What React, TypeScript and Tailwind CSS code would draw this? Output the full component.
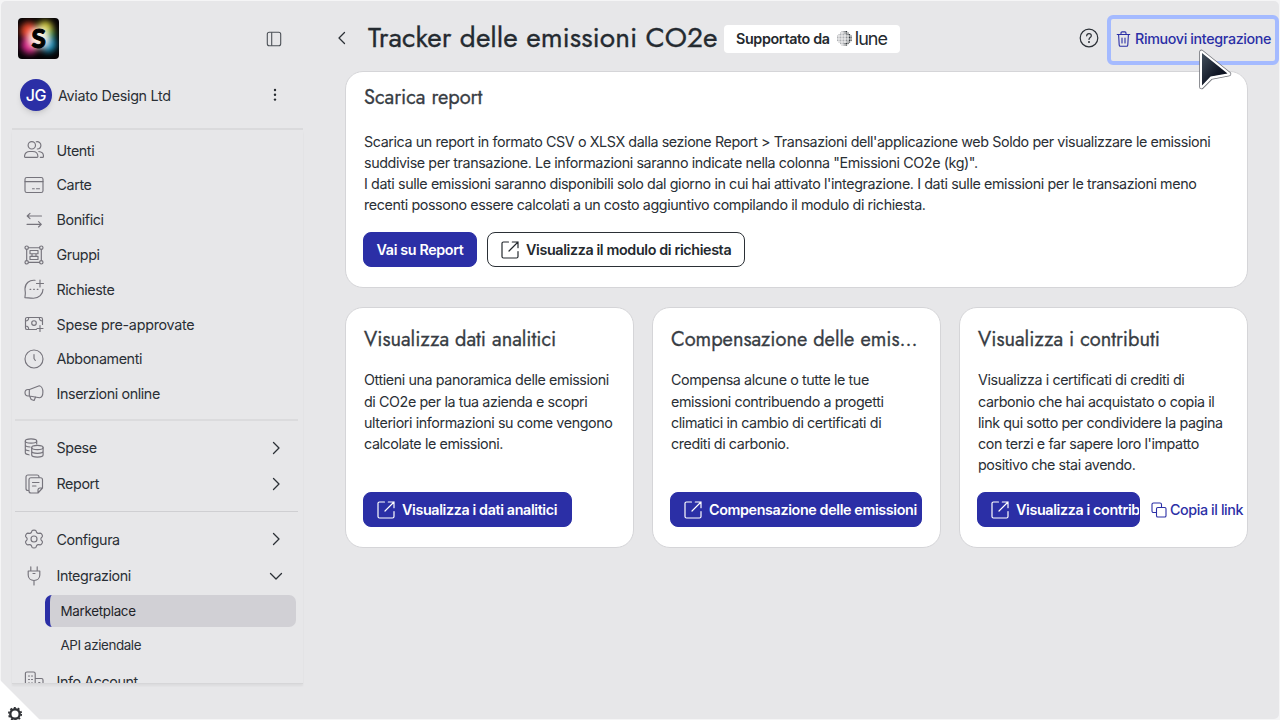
import type { ReactNode } from "react";
import clsx from "clsx";

type IconName =
  | "users"
  | "card"
  | "transfer"
  | "groups"
  | "request"
  | "banknote"
  | "clock"
  | "megaphone"
  | "coins"
  | "report"
  | "gear"
  | "plug"
  | "building";

// Sidebar icons, all drawn on a 20x20 grid
const ICONS: Record<IconName, ReactNode> = {
  users: (
    <>
      <circle cx="7.8" cy="5.3" r="3.7" />
      <path d="M1.3 17.3c-.5 0-.8-.3-.8-.8 0-3.2 2.3-5 5.3-5h2.8c3 0 5.3 1.8 5.3 5 0 .5-.3.8-.8.8zM12.3 1.8c2.4-.6 4.6 1.2 4.6 3.5s-1.700 3.700-3.600 3.700M14.800 11.500c2.700.2 4.700 2 4.700 4.800 0 .6-.3 1-.9 1h-2.300" />
    </>
  ),
  card: (
    <>
      <rect x="1" y="2.500" width="18" height="15" rx="1.800" />
      <path d="M1 6.600h18M8.500 13.700h1.800M12.500 13.700h3" />
    </>
  ),
  transfer: <path d="M17.500 6H3.200M6 3.300 3.200 6 6 8.700M3 14.300h14.300M14.500 11.600l2.800 2.700-2.800 2.700" />,
  groups: (
    <>
      <circle cx="2.700" cy="2.700" r="1.700" />
      <circle cx="17.300" cy="2.700" r="1.700" />
      <circle cx="2.700" cy="17.300" r="1.700" />
      <circle cx="17.300" cy="17.300" r="1.700" />
      <path d="M4.400 2.700h11.200M4.400 17.300h11.200M2.700 4.400v11.200M17.300 4.400v11.200M6 5.500h8v3.200H6zM6 11.300h8v3.200H6zM8 8.700v2.600M12 8.700v2.600" />
    </>
  ),
  request: (
    <path d="M11 1.300C5.500.6 1 4.500 1 9.800c0 2.400.5 3.300.3 5.200l-.4 3.700c3 .1 4.500.5 8.600.5 5.300 0 9.500-4 9.500-9M16 1v7M12.500 4.500h7M6 10.300h.8M9.600 10.300h.8M13.200 10.300h.8" />
  ),
  banknote: (
    <>
      <path d="M12.500 15.500H3.200c-1 0-1.700-.6-1.700-1.600V5.200c0-1 .6-1.700 1.700-1.700h13.600c1.100 0 1.700.7 1.700 1.700v5.300M1.500 7c2 0 3.200-1.300 3.200-3.500M18.500 7c-2 0-3.200-1.300-3.200-3.500M1.500 12c2 0 3.200 1.300 3.200 3.500M16 11.500v6M13 14.500h6" />
      <circle cx="10" cy="9" r="2.300" />
    </>
  ),
  clock: (
    <>
      <circle cx="10" cy="10" r="9" />
      <path d="M10 5.500v4l1.300 2" />
    </>
  ),
  megaphone: (
    <path d="M5.500 5.500 15.300 1.800c2 .3 3.600 3 3.600 6.200s-1.500 5.500-3.400 5.800L5.300 12H4c-1.800 0-3-1.300-3-3.200s1.200-3.300 3-3.300zM5.300 5.700v6.200M5.700 12.200l1.500 3.300 2.900 1 1.500-3.400" />
  ),
  coins: (
    <>
      <ellipse cx="7" cy="3" rx="5.700" ry="2.100" />
      <path d="M1.300 3v11.800c0 1 1.600 1.700 3.700 2M12.700 3v3M1.300 7c0 1 1.800 1.800 4.800 2M1.300 11c0 1 1.600 1.600 3.700 1.800" />
      <ellipse cx="13.400" cy="9.500" rx="5.700" ry="2.100" />
      <path d="M7.700 9.500v7.600c0 1.100 2.500 2 5.700 2s5.700-.9 5.700-2V9.500M7.700 13.300c0 1.200 2.500 2 5.700 2s5.700-.8 5.700-2" />
    </>
  ),
  report: (
    <>
      <path d="M4.500 16.500H4c-1.200 0-2-.8-2-2V3c0-1.200.8-2 2-2h9c1.200 0 2 .8 2 2v.5" />
      <path d="m18.500 14-4.500 5H7c-1.200 0-2-.8-2-2V5.700c0-1.200.8-2 2-2h9.500c1.200 0 2 .8 2 2zM18.500 14H16c-1.200 0-2 .8-2 2v3M8.500 8.500h6.500M8.500 12h3.500" />
    </>
  ),
  gear: (
    <>
      <circle cx="10" cy="10" r="3" />
      <path d="M8 1.800c.6-1 3.400-1 4 0l.6 1.600c.4.7 1.200 1.100 2 1l1.700-.3c1.200 0 2.600 2.400 2 3.500l-1.100 1.300c-.5.700-.5 1.500 0 2.200l1.100 1.300c.6 1.100-.8 3.500-2 3.500l-1.700-.3c-.8-.1-1.600.3-2 1l-.6 1.600c-.6 1-3.400 1-4 0l-.6-1.600c-.4-.7-1.200-1.100-2-1l-1.700.3c-1.200 0-2.600-2.400-2-3.500l1.100-1.300c.5-.7.5-1.500 0-2.200L1.700 7.600c-.6-1.100.8-3.500 2-3.500l1.700.3c.8.1 1.600-.3 2-1z" />
    </>
  ),
  plug: <path d="M6.800.8v4M13.200.8v4M4.200 5h11.600v4c0 3.200-2.400 5.500-5.800 5.500S4.200 12.200 4.200 9zM10 14.500V19M9 7.500h2" />,
  building: (
    <path d="M11.500 19H3c-1 0-1.600-.6-1.600-1.600V2.600C1.400 1.600 2 1 3 1h6.500c1 0 1.700.6 1.700 1.600V19M11.500 7.500h6c1 0 1.500.5 1.500 1.500v9c0 .6-.4 1-1 1h-6.500M4.500 5h1M7.500 5h1M4.500 8.500h1M7.500 8.500h1M4.500 12h1M7.500 12h1M14.700 11.500h1.200" />
  ),
};

function NavIcon({ name }: { name: IconName }) {
  return (
    <svg
      viewBox="0 0 20 20"
      className="size-5 shrink-0 text-[#76747c]"
      fill="none"
      stroke="currentColor"
      strokeWidth="1.15"
      strokeLinecap="round"
      strokeLinejoin="round"
    >
      {ICONS[name]}
    </svg>
  );
}

const MAIN_NAV: { label: string; icon: IconName; className?: string }[] = [
  { label: "Utenti", icon: "users" },
  { label: "Carte", icon: "card" },
  { label: "Bonifici", icon: "transfer" },
  { label: "Gruppi", icon: "groups" },
  { label: "Richieste", icon: "request" },
  { label: "Spese pre-approvate", icon: "banknote", className: "tracking-[-0.260px]" },
  { label: "Abbonamenti", icon: "clock" },
  { label: "Inserzioni online", icon: "megaphone" },
];

function Chevron({ className }: { className?: string }) {
  return (
    <svg viewBox="0 0 14 14" className={clsx("size-3.5", className)} fill="none" stroke="#2b3036" strokeWidth="1.300" strokeLinecap="round" strokeLinejoin="round">
      <path d="m4.500 1.500 5.500 5.500-5.500 5.500" />
    </svg>
  );
}

function NavRow({ label, icon, chevron, className }: { label: string; icon: IconName; chevron?: "right" | "down"; className?: string }) {
  return (
    <div className={clsx("flex shrink-0 items-center pl-2.5 pr-[13px]", chevron ? "h-[36.300px]" : "h-[34.800px]")}>
      <NavIcon name={icon} />
      <span className={clsx("ml-[12.500px] flex-1 whitespace-nowrap", className)}>{label}</span>
      {chevron && <Chevron className={chevron === "down" ? "rotate-90" : ""} />}
    </div>
  );
}

function Logo() {
  return (
    <svg viewBox="0 0 41 41" className="size-[41px] rounded-[4px]">
      <defs>
        <filter id="glow" x="-50%" y="-50%" width="200%" height="200%">
          <feGaussianBlur stdDeviation="3.200" />
        </filter>
      </defs>
      <rect width="41" height="41" fill="#050305" />
      <g filter="url(#glow)">
        <circle cx="11" cy="13" r="8.500" fill="#ee4a2c" />
        <circle cx="27" cy="11" r="8" fill="#d6d03c" />
        <circle cx="12" cy="27" r="8.500" fill="#e42a94" />
        <circle cx="30" cy="26" r="8" fill="#1ca0ca" />
        <circle cx="33" cy="16" r="4" fill="#3fa850" />
        <circle cx="21" cy="20" r="9.500" fill="#fdf3e6" />
      </g>
      <text x="20.500" y="29.500" textAnchor="middle" fontSize="26" fontWeight="900" fill="#030303" stroke="#030303" strokeWidth="1" fontFamily="Lato, sans-serif">
        S
      </text>
    </svg>
  );
}

function Sidebar() {
  return (
    <aside className="flex w-[304px] shrink-0 flex-col pl-[11px] text-[14.300px]">
      <div className="flex h-[75px] items-center justify-between pl-1.5 pr-[23px]">
        <Logo />
        <svg viewBox="0 0 16 16" className="size-4" fill="none" stroke="#4c5157" strokeWidth="1.100">
          <rect x="1.300" y="1.300" width="13.400" height="13.400" rx="2" />
          <path d="M5.700 1.300v13.400" />
        </svg>
      </div>
      <div className="flex h-[52px] shrink-0 items-start pl-2 pr-7 pt-[3px]">
        <div className="flex size-8 items-center justify-center rounded-full bg-[#2b2fa6] text-[16px] font-medium text-white shadow-md">JG</div>
        <span className="ml-1.5 mt-1.5 flex-1 tracking-[-0.280px]">Aviato Design Ltd</span>
        <svg viewBox="0 0 4 14" className="mt-[9px] h-3.5 w-1" fill="#25292e">
          <circle cx="2" cy="2" r="1.200" />
          <circle cx="2" cy="6.800" r="1.200" />
          <circle cx="2" cy="11.600" r="1.200" />
        </svg>
      </div>
      <div className="h-0.5 w-[291px] shrink-0 bg-[#dadadc]" />
      <nav className="flex h-[554px] w-[291px] flex-col overflow-hidden border-b border-[#d6d6d8] pl-0.5 pr-[7px] pt-[2.900px] shadow-[0_2px_2px_rgba(0,0,0,0.05)]">
        {MAIN_NAV.map((item) => (
          <NavRow key={item.label} {...item} />
        ))}
        <hr className="-mr-0.5 mb-[9px] ml-[1px] mt-[7.400px] shrink-0 border-t-2 border-[#dbdbdd]" />
        <NavRow label="Spese" icon="coins" chevron="right" />
        <NavRow label="Report" icon="report" chevron="right" />
        <hr className="-mr-0.5 mb-[9px] ml-[1px] mt-[9px] shrink-0 border-[#cfcfd2]" />
        <NavRow label="Configura" icon="gear" chevron="right" />
        <NavRow label="Integrazioni" icon="plug" chevron="down" />
        <div className="ml-[31px] mt-[1px] flex h-8 shrink-0 items-center rounded-[7px] border-l-[5px] border-[#2b2fa6] bg-[#d1d0d5] pl-[10.500px] text-[13.400px] tracking-[-0.300px] text-[#1f2429]">
          Marketplace
        </div>
        <div className="ml-[46.500px] flex h-[37px] shrink-0 items-center text-[13.400px]">API aziendale</div>
        <NavRow label="Info Account" icon="building" />
      </nav>
    </aside>
  );
}

function ExternalIcon() {
  return (
    <svg viewBox="0 0 18 18" className="size-[18px] shrink-0" fill="none" stroke="currentColor" strokeWidth="1.200" strokeLinecap="round" strokeLinejoin="round">
      <path d="M7.500 1H2.500C1.600 1 1 1.600 1 2.500v13c0 .9.600 1.500 1.500 1.500h13c.9 0 1.500-.6 1.500-1.500v-5M8 10l9-9M11.300 1H17v5.700" />
    </svg>
  );
}

function Button({ children, outline, external, className }: { children: ReactNode; outline?: boolean; external?: boolean; className?: string }) {
  return (
    <button
      className={clsx(
        "flex h-[35px] shrink-0 items-center overflow-hidden whitespace-nowrap rounded-[8px] border pt-[1px] text-[14.300px] font-semibold tracking-[-0.360px]",
        outline ? "border-[#2b3036] bg-white text-[#24292e]" : "border-[#2b2fa6] bg-[#2b2fa6] text-white",
        external ? "gap-[7px] pl-[13px]" : "justify-center",
        className
      )}
    >
      {external && <ExternalIcon />}
      <span>{children}</span>
    </button>
  );
}

const CARD = "rounded-[18px] border border-[#d5d5d8] bg-white";
const HEADING = "font-[Jost,Lato,sans-serif] font-normal tracking-normal whitespace-nowrap [-webkit-text-stroke:0.3px]";

function InfoCard({ title, lines, children }: { title: string; lines: string[]; children: ReactNode }) {
  return (
    <section className={clsx(CARD, "flex h-[241px] w-[289px] flex-col pl-[17px]")}>
      <h2 className={clsx(HEADING, "ml-[1px] mt-[18px] text-[20px] leading-7 text-[#383d44]")}>{title}</h2>
      <p className="ml-[1px] mt-[15.400px] h-[122.600px] whitespace-nowrap text-[14.300px] leading-[21.200px]">
        {lines.map((line) => (
          <span key={line} className="block">
            {line}
          </span>
        ))}
      </p>
      <div className="flex items-center">{children}</div>
    </section>
  );
}

// Dotted sphere: cells get darker towards the right edge
function LuneMark() {
  const cells = [];
  for (let y = 0; y < 10; y++) {
    for (let x = 0; x < 10; x++) {
      const dx = x - 4.5;
      const dy = y - 4.5;
      const dist = dx * dx + dy * dy;
      if (dist > 23) continue;
      const edge = dx > 0 && dist > 12;
      cells.push(
        <rect key={`${x}-${y}`} x={x * 1.6} y={y * 1.6} width="1.200" height="1.200" fill={edge ? "#33383c" : x > 5 ? "#8d9093" : "#aeb0b3"} />
      );
    }
  }
  return (
    <svg viewBox="0 0 16 16" className="size-[15px]">
      {cells}
    </svg>
  );
}

function Header() {
  return (
    <header className="flex h-[70px] items-start pt-[14px]">
      <Chevron className="mt-4 rotate-180" />
      <h1 className={clsx(HEADING, "ml-[19px] mt-[5px] w-[356px] text-[28.100px] leading-9 text-[#252b31]")}>
        Tracker delle emissioni CO2e
      </h1>
      <div className="mt-[10px] flex h-7 w-[176px] items-center rounded-[4px] bg-white pl-3 text-[14.300px] font-semibold tracking-[-0.350px] text-[#24292e]">
        <span className="whitespace-nowrap">Supportato da</span>
        <span className="ml-[7px] mt-[-1px] flex items-center gap-[3px] text-[18px] font-normal leading-none tracking-[-0.900px]">
          <LuneMark />
          lune
        </span>
      </div>
      <div className="ml-auto flex items-center gap-2">
        <svg viewBox="0 0 20 20" className="mb-1 size-5" fill="none" stroke="#2b3036" strokeWidth="1.200" strokeLinecap="round">
          <circle cx="10" cy="10" r="8.800" />
          <path d="M7.700 7.800C7.800 6.400 8.800 5.700 10 5.700s2.300.8 2.300 2c0 1.800-2.300 1.900-2.300 3.700" />
          <circle cx="10" cy="13.900" r=".4" fill="#2b3036" />
        </svg>
        <button className="flex h-[50px] w-[172px] items-center gap-1 whitespace-nowrap rounded-[6px] border-4 border-[#a4baff] pb-[2px] pl-[5px] text-[14.300px] font-medium tracking-[-0.350px] text-[#2b2fa6]">
          <svg viewBox="0 0 15 16" className="h-4 w-[15px] shrink-0" fill="none" stroke="currentColor" strokeWidth="1.100" strokeLinecap="round" strokeLinejoin="round">
            <path d="M1.200 3.500h12.600M5 3.200V2c0-.7.400-1.100 1.100-1.100h2.800c.7 0 1.100.4 1.100 1.100v1.200M2.600 3.700l.6 10.200c0 .8.600 1.300 1.300 1.300h6c.7 0 1.300-.5 1.300-1.300l.6-10.200M6 7v5M9 7v5" />
          </svg>
          Rimuovi integrazione
        </button>
      </div>
    </header>
  );
}

function Cursor() {
  return (
    <svg viewBox="0 0 36 44" className="pointer-events-none absolute left-[1197px] top-[47px] h-11 w-9">
      <defs>
        <linearGradient id="cursor" x1="0" y1="0" x2="1" y2="1">
          <stop offset="0" stopColor="#43505c" />
          <stop offset=".6" stopColor="#121827" />
          <stop offset="1" stopColor="#080b18" />
        </linearGradient>
      </defs>
      <g strokeLinejoin="round">
        <path d="M4.500 5v35L14 30.500 32 27z" fill="#fff" stroke="#74767c" strokeWidth="4.600" />
        <path d="M4.500 5v35L14 30.500 32 27z" fill="url(#cursor)" stroke="#fff" strokeWidth="3" />
        <path d="M5 6v32.500l8.500-9L30.500 26.500z" fill="url(#cursor)" />
      </g>
    </svg>
  );
}

export default function App() {
  return (
    <div className="h-[720px] w-[1280px] overflow-hidden bg-[#f5f5f6] p-px font-[Inter,sans-serif] tracking-[-0.400px] text-[#2a2f35]">
      <div className="flex h-[718px] rounded-[5px] bg-[#e7e7e9]">
        <Sidebar />
        <main className="min-w-0 flex-1 pl-[30px]">
          <Header />
          <div className="ml-[10px] w-[903px]">
            <section className={clsx(CARD, "h-[217px] pl-[17px]")}>
              <h2 className={clsx(HEADING, "ml-[1px] mt-3 text-[20px] leading-7 text-[#383d44]")}>Scarica report</h2>
              <p className="ml-[1px] mt-[18.600px] whitespace-nowrap text-[14.300px] leading-[21.100px]">
                Scarica un report in formato CSV o XLSX dalla sezione Report &gt; Transazioni dell'applicazione web Soldo per visualizzare le emissioni
                <br />
                suddivise per transazione. Le informazioni saranno indicate nella colonna "Emissioni CO2e (kg)".
                <br />
                I dati sulle emissioni saranno disponibili solo dal giorno in cui hai attivato l'integrazione. I dati sulle emissioni per le transazioni meno
                <br />
                recenti possono essere calcolati a un costo aggiuntivo compilando il modulo di richiesta.
              </p>
              <div className="mt-[17px] flex gap-[10px]">
                <Button className="w-[114px]">Vai su Report</Button>
                <Button outline external className="w-[258px]">
                  Visualizza il modulo di richiesta
                </Button>
              </div>
            </section>
            <div className="mt-[19px] flex justify-between">
              <InfoCard
                title="Visualizza dati analitici"
                lines={["Ottieni una panoramica delle emissioni", "di CO2e per la tua azienda e scopri", "ulteriori informazioni su come vengono", "calcolate le emissioni."]}
              >
                <Button external className="w-[209px]">
                  Visualizza i dati analitici
                </Button>
              </InfoCard>
              <InfoCard
                title="Compensazione delle emis..."
                lines={["Compensa alcune o tutte le tue", "emissioni contribuendo a progetti", "climatici in cambio di certificati di", "crediti di carbonio."]}
              >
                <Button external className="w-[252px]">
                  Compensazione delle emissioni
                </Button>
              </InfoCard>
              <InfoCard
                title="Visualizza i contributi"
                lines={["Visualizza i certificati di crediti di", "carbonio che hai acquistato o copia il", "link qui sotto per condividere la pagina", "con terzi e far sapere loro l'impatto", "positivo che stai avendo."]}
              >
                <Button external className="w-[163px]">
                  Visualizza i contributi
                </Button>
                <button className="ml-[11px] flex items-center gap-[3px] whitespace-nowrap pt-[1px] text-[14.300px] font-medium text-[#2b2fa6]">
                  <svg viewBox="0 0 16 16" className="size-4 shrink-0" fill="none" stroke="currentColor" strokeWidth="1.100" strokeLinejoin="round">
                    <path d="M5.500 10.500H2.500C1.600 10.500 1 9.900 1 9V2.500C1 1.600 1.600 1 2.500 1H9c.9 0 1.500.6 1.500 1.500v3" />
                    <rect x="5.500" y="5.500" width="9.500" height="9.500" rx="1.300" />
                  </svg>
                  Copia il link
                </button>
              </InfoCard>
            </div>
          </div>
        </main>
      </div>
      {/* corner settings tab */}
      <svg viewBox="0 0 40 40" className="absolute bottom-0 left-0 size-10">
        <path d="M0 0v40h40z" fill="#fff" />
        <circle cx="15" cy="34" r="4.700" fill="none" stroke="#303236" strokeWidth="2.400" />
        <circle cx="15" cy="34" r="6.200" fill="none" stroke="#303236" strokeWidth="1.700" strokeDasharray="1.950 1.950" />
      </svg>
      <Cursor />
    </div>
  );
}
